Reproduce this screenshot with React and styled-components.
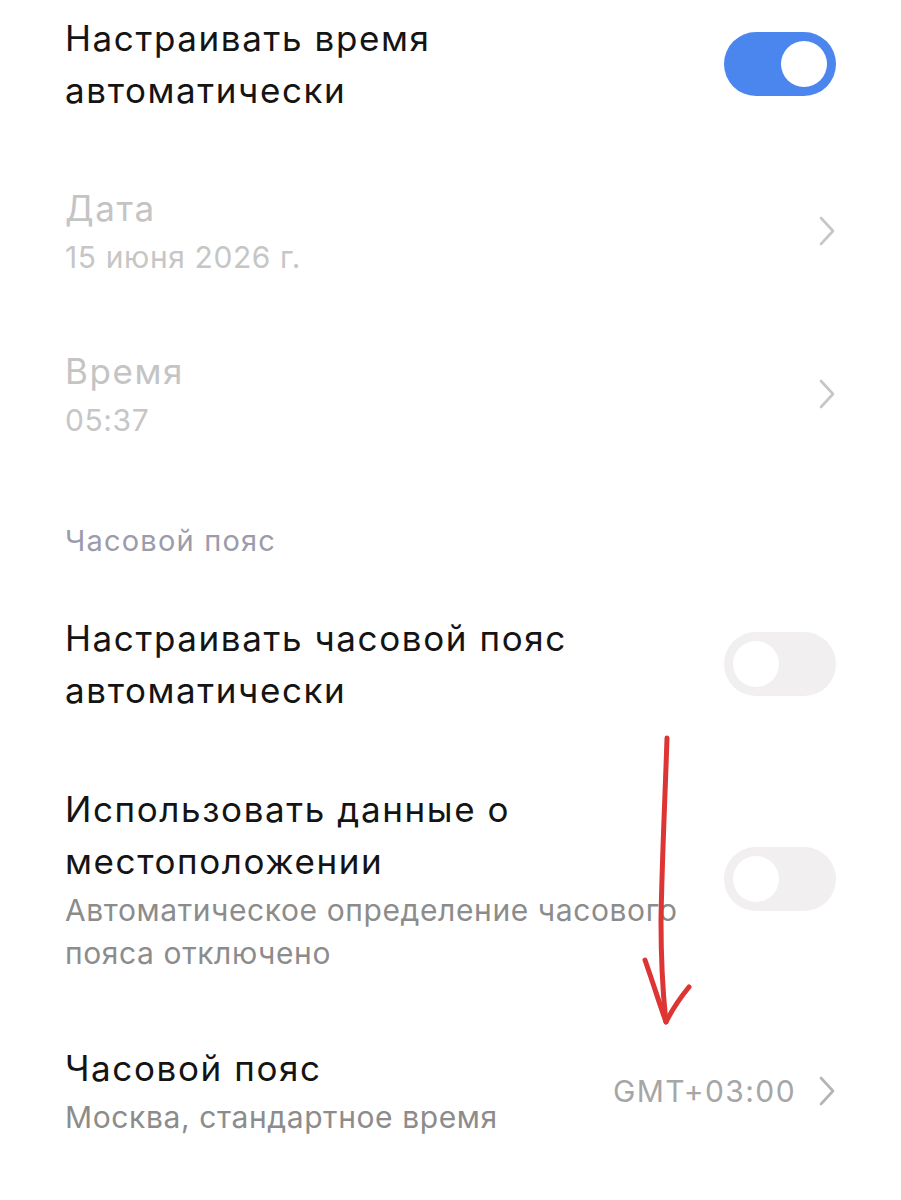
import React from 'react';
import styled, { createGlobalStyle } from 'styled-components';

const GlobalStyle = createGlobalStyle`
  html, body {
    margin: 0;
    padding: 0;
    background: #fff;
  }
  body {
    font-family: Inter, "Noto Sans", "Liberation Sans", sans-serif;
    -webkit-font-smoothing: antialiased;
  }
`;

const Page = styled.div`
  position: relative;
  width: 901px;
  height: 1200px;
  overflow: hidden;
  background: #fff;
`;

const Row = styled.div`
  display: flex;
  align-items: center;
  justify-content: space-between;
  padding: ${(p) => p.$pad || '0'};
  padding-left: 65px;
  padding-right: 65px;
  gap: 24px;
`;

const TextBlock = styled.div`
  display: flex;
  flex-direction: column;
  flex: 1;
  min-width: 0;
  white-space: nowrap;
`;

const Title = styled.div`
  font-size: 35px;
  line-height: 52px;
  letter-spacing: 1.6px;
  color: ${(p) => (p.$disabled ? '#c4c4c4' : '#141414')};
`;

const Subtitle = styled.div`
  font-size: 30px;
  line-height: 43px;
  letter-spacing: 0.6px;
  margin-top: 2px;
  color: ${(p) => (p.$disabled ? '#c6c6c6' : '#8c8c8c')};
`;

const SectionLabel = styled.div`
  font-size: 29px;
  line-height: 40px;
  letter-spacing: 1.2px;
  color: #9b9bab;
  padding: ${(p) => p.$pad || '0'};
  padding-left: 65px;
`;

const Trailing = styled.div`
  display: flex;
  align-items: center;
  gap: 22px;
  flex-shrink: 0;
`;

const Value = styled.span`
  font-size: 30px;
  letter-spacing: 1.4px;
  color: #a6a6a6;
`;

const Track = styled.div`
  width: 112px;
  height: 64px;
  border-radius: 32px;
  background: ${(p) => (p.$on ? '#4a86ee' : '#f1efef')};
  display: flex;
  align-items: center;
  justify-content: ${(p) => (p.$on ? 'flex-end' : 'flex-start')};
  padding: 0 9px;
  box-sizing: border-box;
  flex-shrink: 0;
`;

const Knob = styled.div`
  width: 46px;
  height: 46px;
  border-radius: 50%;
  background: #fff;
`;

const Toggle = ({ on }) => (
  <Track $on={on}>
    <Knob />
  </Track>
);

const Chevron = ({ color = '#bdbdbd' }) => (
  <svg width="18" height="30" viewBox="0 0 18 30" fill="none">
    <path d="M3 2 L15 15 L3 28" stroke={color} strokeWidth="2.6" strokeLinecap="round" strokeLinejoin="round" />
  </svg>
);

const Arrow = styled.svg`
  position: absolute;
  left: 0;
  top: 0;
  pointer-events: none;
`;

export default function App() {
  return (
    <>
      <GlobalStyle />
      <Page>
        <Row $pad="12px 0 0">
          <TextBlock>
            <Title>Настраивать время<br />автоматически</Title>
          </TextBlock>
          <Toggle on />
        </Row>

        <Row $pad="66px 0 0">
          <TextBlock>
            <Title $disabled>Дата</Title>
            <Subtitle $disabled>15 июня 2026 г.</Subtitle>
          </TextBlock>
          <Chevron color="#c6c6c6" />
        </Row>

        <Row $pad="66px 0 0">
          <TextBlock>
            <Title $disabled>Время</Title>
            <Subtitle $disabled>05:37</Subtitle>
          </TextBlock>
          <Chevron color="#c6c6c6" />
        </Row>

        <SectionLabel $pad="79px 0 0">Часовой пояс</SectionLabel>

        <Row $pad="51px 0 0">
          <TextBlock>
            <Title>Настраивать часовой пояс<br />автоматически</Title>
          </TextBlock>
          <Toggle />
        </Row>

        <Row $pad="67px 0 0">
          <TextBlock>
            <Title>Использовать данные о<br />местоположении</Title>
            <Subtitle>Автоматическое определение часового<br />пояса отключено</Subtitle>
          </TextBlock>
          <Toggle />
        </Row>

        <Row $pad="67px 0 0">
          <TextBlock>
            <Title>Часовой пояс</Title>
            <Subtitle>Москва, стандартное время</Subtitle>
          </TextBlock>
          <Trailing>
            <Value>GMT+03:00</Value>
            <Chevron color="#b4b4b4" />
          </Trailing>
        </Row>

        <Arrow width="901" height="1200" viewBox="0 0 901 1200">
          <path
            d="M667 738 C665 800 662 860 661 920 C661 960 663 995 666 1022"
            stroke="#dd3434"
            strokeWidth="5"
            fill="none"
            strokeLinecap="round"
          />
          <path
            d="M645 960 C652 980 660 1005 666 1022 C672 1010 680 998 689 987"
            stroke="#dd3434"
            strokeWidth="5"
            fill="none"
            strokeLinecap="round"
            strokeLinejoin="round"
          />
        </Arrow>
      </Page>
    </>
  );
}
